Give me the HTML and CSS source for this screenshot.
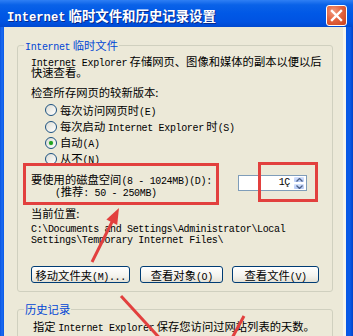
FILE: index.html
```html
<!DOCTYPE html>
<html lang="zh-CN">
<head>
<meta charset="utf-8">
<title>Internet 临时文件和历史记录设置</title>
<link rel="stylesheet" href="styles.css">
</head>
<body>
<div class="window">
  <div class="titlebar">
    <span class="title"><span class="tm">Internet</span> 临时文件和历史记录设置</span>
    <div class="close">
      <svg width="13" height="13" viewBox="0 0 13 13"><path d="M2 2 L11 11 M11 2 L2 11" stroke="#fff" stroke-width="2.4" stroke-linecap="square"/></svg>
    </div>
  </div>
  <div class="body">
    <fieldset class="group g1">
      <legend><span class="m">Internet</span> 临时文件</legend>
      <div class="content">
        <p class="desc"><span class="m">Internet Explorer</span> 存储网页、图像和媒体的副本以便以后<br>快速查看。</p>
        <p class="check">检查所存网页的较新版本:</p>
        <div class="radios">
          <div class="radio"><span class="dot"></span><span class="lbl">每次访问网页时<span class="m">(E)</span></span></div>
          <div class="radio"><span class="dot"></span><span class="lbl">每次启动 <span class="m">Internet Explorer</span> 时<span class="m">(S)</span></span></div>
          <div class="radio"><span class="dot on"></span><span class="lbl">自动<span class="m">(A)</span></span></div>
          <div class="radio"><span class="dot"></span><span class="lbl">从不<span class="m">(N)</span></span></div>
        </div>
        <div class="disk">
          <div class="disklabel">
            <div>要使用的磁盘空间<span class="m">(8 - 1024MB)(D):</span></div>
            <div class="rec"><span class="m">(</span>推荐<span class="m">: 50 - 250MB)</span></div>
          </div>
          <div class="spin">
            <span class="val">1Ç</span>
            <span class="spinbtns">
              <span class="sb"><svg width="7" height="4" viewBox="0 0 7 4"><path d="M0.5 3.5 L3.5 0.5 L6.5 3.5" fill="none" stroke="#4D6185" stroke-width="1.3"/></svg></span>
              <span class="sb"><svg width="7" height="4" viewBox="0 0 7 4"><path d="M0.5 0.5 L3.5 3.5 L6.5 0.5" fill="none" stroke="#4D6185" stroke-width="1.3"/></svg></span>
            </span>
          </div>
        </div>
        <p class="loc">当前位置:</p>
        <p class="path">C:\Documents and Settings\Administrator\Local<br>Settings\Temporary Internet Files\</p>
        <div class="buttons">
          <div class="btn b1"><span>移动文件夹<span class="m">(M)...</span></span></div>
          <div class="btn b2"><span>查看对象<span class="m">(O)</span></span></div>
          <div class="btn b3"><span>查看文件<span class="m">(V)</span></span></div>
        </div>
      </div>
    </fieldset>
    <fieldset class="group g2">
      <legend>历史记录</legend>
      <div class="content c2">
        <p class="hist">指定 <span class="m">Internet Explorer</span> 保存您访问过网站列表的天数。</p>
      </div>
    </fieldset>
  </div>
  <svg class="marks" width="353" height="336" viewBox="0 0 353 336">
    <rect x="24.5" y="164.5" width="193" height="39" fill="none" stroke="#E2403E" stroke-width="3"/>
    <rect x="259.5" y="163.5" width="57" height="37" fill="none" stroke="#E2403E" stroke-width="3"/>
    <path d="M92 262 L113 220" stroke="#E2403E" stroke-width="3"/>
    <path d="M119 208 L106.4 219.6 L117.2 225 Z" fill="#E2403E"/>
    <path d="M121 296 L166 345" stroke="#E2403E" stroke-width="3"/>
    <path d="M231 340 L244 316" stroke="#E2403E" stroke-width="3"/>
  </svg>
</div>
</body>
</html>
```
FILE: styles.css
```css
html, body {
  margin: 0;
  padding: 0;
}
body {
  width: 353px;
  height: 336px;
  overflow: hidden;
  font-family: "Noto Sans CJK SC", "Noto Sans", sans-serif;
  font-size: 11.3px;
  color: #000;
}
p { margin: 0; }
.m {
  font-family: "Liberation Mono", "Noto Sans CJK SC", monospace;
  font-size: 10px;
  letter-spacing: -0.35px;
  line-height: 0;
}
.window {
  position: relative;
  width: 353px;
  height: 336px;
  overflow: hidden;
  background: linear-gradient(to right, #0A54E0 0, #1C6BF0 2px, #0859E8 4px, transparent 4px, transparent 346px, #0758E6 346px, #0A5AE8 350px, #0042C8 353px);
  display: flex;
  flex-direction: column;
}
.titlebar {
  height: 27px;
  flex: none;
  display: flex;
  align-items: center;
  justify-content: space-between;
  padding: 0 6px 0 7px;
  background: linear-gradient(to bottom, #2F7FF4 0%, #0A62E8 18%, #0058E6 50%, #0053E2 80%, #0049D0 100%);
}
.title {
  font-family: "Noto Sans CJK SC", sans-serif;
  color: #fff;
  font-weight: bold;
  font-size: 13.4px;
  line-height: 16px;
  text-shadow: 1px 1px 0 #0A2A8A;
  margin-top: 2px;
  white-space: nowrap;
}
.tm {
  font-family: "Liberation Mono", monospace;
  font-size: 12.2px;
  font-weight: bold;
  line-height: 0;
}
.close {
  width: 19px;
  height: 19px;
  margin-top: 4px;
  border: 1px solid #fff;
  border-radius: 3px;
  background: radial-gradient(circle at 35% 30%, #F29B80 0%, #E4643F 45%, #C9401C 100%);
  display: flex;
  align-items: center;
  justify-content: center;
}
.body {
  flex: 1;
  margin: 0 7px 0 4px;
  background: #ECE9D8;
  padding: 12px 13px 0 13px;
  position: relative;
  box-shadow: inset -3px 0 0 #F6F5EE;
}
.group {
  box-sizing: border-box;
  width: 316px;
  margin: 0;
  border: 1px solid #D0D0BF;
  border-radius: 3px;
  padding: 0 0 0 6px;
  min-width: 0;
}
.group legend {
  padding: 0 1px;
  color: #0046D5;
  line-height: 13px;
}
.content {
  padding: 4px 13px 8px 7px;
}
.desc { line-height: 11px; white-space: nowrap; }
.check { line-height: 12px; margin-top: 7.5px; }
.radios { margin-top: 4px; }
.radio {
  height: 16.3px;
  line-height: 16.3px;
  padding-left: 14px;
  white-space: nowrap;
}
.dot {
  box-sizing: border-box;
  display: inline-flex;
  vertical-align: middle;
  position: relative;
  top: -1px;
  width: 12px;
  height: 12px;
  border: 1px solid #1D5281;
  border-radius: 50%;
  background: linear-gradient(135deg, #DCDCD4 0%, #F2F2EE 60%, #FFFFFF 100%);
  margin-right: 3px;
  align-items: center;
  justify-content: center;
}
.dot.on::after {
  content: "";
  width: 4px;
  height: 4px;
  border-radius: 50%;
  background: #21A121;
  box-shadow: 0 0 1px #5ACB5A;
}
.disk {
  margin-top: 6.8px;
  display: flex;
  align-items: flex-start;
}
.disklabel { line-height: 12px; white-space: nowrap; }
.rec { padding-left: 24px; }
.spin {
  box-sizing: border-box;
  margin-left: auto;
  margin-right: 12px;
  margin-top: 2px;
  width: 69px;
  height: 16px;
  border: 1px solid #7F9DB9;
  background: #fff;
  display: flex;
  align-items: center;
  justify-content: flex-end;
  padding-right: 1px;
}
.val {
  font-family: "Liberation Mono", monospace;
  font-size: 10px;
  letter-spacing: -0.35px;
  margin-right: 3px;
  line-height: 14px;
}
.spinbtns {
  display: flex;
  flex-direction: column;
  width: 12px;
  height: 14px;
}
.sb {
  flex: 1;
  background: linear-gradient(to bottom, #D6E3FD, #B4C8F6);
  border: 1px solid #fff;
  border-radius: 2px;
  display: flex;
  align-items: center;
  justify-content: center;
  box-sizing: border-box;
}
.loc { line-height: 12px; margin-top: 10px; }
.path {
  font-family: "Liberation Mono", monospace;
  font-size: 10px;
  letter-spacing: -0.35px;
  line-height: 11px;
  margin-top: 4.5px;
  white-space: nowrap;
}
.buttons {
  margin-top: 20.5px;
  display: flex;
  gap: 10px;
}
.btn {
  box-sizing: border-box;
  height: 17px;
  border: 1px solid #003C74;
  border-radius: 3px;
  background: linear-gradient(to bottom, #FFFFFF 0%, #F4F3EE 60%, #E4E1D5 100%);
  display: flex;
  align-items: center;
  justify-content: center;
  white-space: nowrap;
  line-height: 12px;
}
.b1 { width: 102px; }
.b2 { width: 85px; }
.b3 { width: 89px; margin-left: -1px; }
.g2 { margin-top: 10.5px; height: 60px; }
.c2 { padding-top: 4.5px; }
.hist { line-height: 12px; white-space: nowrap; padding-left: 2px; }
.marks {
  position: absolute;
  left: 0;
  top: 0;
  pointer-events: none;
}
```
